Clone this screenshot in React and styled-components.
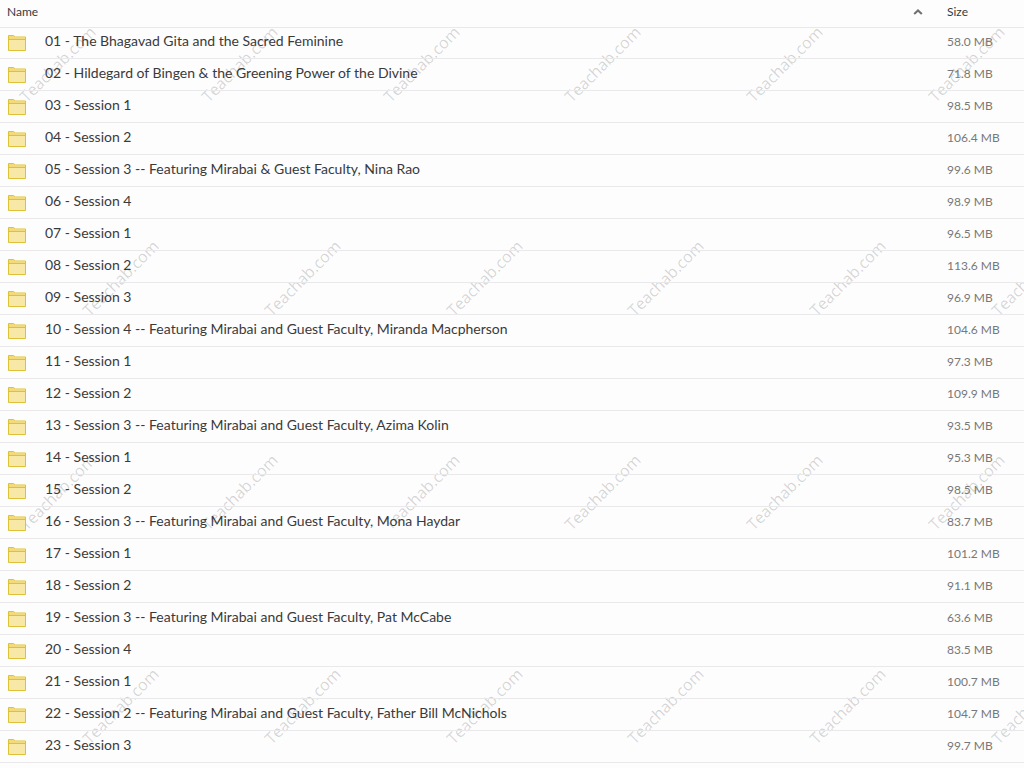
import React from 'react';
import styled, { createGlobalStyle } from 'styled-components';

//------------------------------------------------------------------------------
// DATA:
//------------------------------------------------------------------------------
const folders = [
  { name: '01 - The Bhagavad Gita and the Sacred Feminine', size: '58.0 MB' },
  { name: '02 - Hildegard of Bingen & the Greening Power of the Divine', size: '71.8 MB' },
  { name: '03 - Session 1', size: '98.5 MB' },
  { name: '04 - Session 2', size: '106.4 MB' },
  { name: '05 - Session 3 -- Featuring Mirabai & Guest Faculty, Nina Rao', size: '99.6 MB' },
  { name: '06 - Session 4', size: '98.9 MB' },
  { name: '07 - Session 1', size: '96.5 MB' },
  { name: '08 - Session 2', size: '113.6 MB' },
  { name: '09 - Session 3', size: '96.9 MB' },
  { name: '10 - Session 4 -- Featuring Mirabai and Guest Faculty, Miranda Macpherson', size: '104.6 MB' },
  { name: '11 - Session 1', size: '97.3 MB' },
  { name: '12 - Session 2', size: '109.9 MB' },
  { name: '13 - Session 3 -- Featuring Mirabai and Guest Faculty, Azima Kolin', size: '93.5 MB' },
  { name: '14 - Session 1', size: '95.3 MB' },
  { name: '15 - Session 2', size: '98.5 MB' },
  { name: '16 - Session 3 -- Featuring Mirabai and Guest Faculty, Mona Haydar', size: '83.7 MB' },
  { name: '17 - Session 1', size: '101.2 MB' },
  { name: '18 - Session 2', size: '91.1 MB' },
  { name: '19 - Session 3 -- Featuring Mirabai and Guest Faculty, Pat McCabe', size: '63.6 MB' },
  { name: '20 - Session 4', size: '83.5 MB' },
  { name: '21 - Session 1', size: '100.7 MB' },
  { name: '22 - Session 2 -- Featuring Mirabai and Guest Faculty, Father Bill McNichols', size: '104.7 MB' },
  { name: '23 - Session 3', size: '99.7 MB' },
];

const markRows = [0, 1, 2, 3];
const markColumns = [0, 1, 2, 3, 4, 5];

//------------------------------------------------------------------------------
// STYLE:
//------------------------------------------------------------------------------
const GlobalStyle = createGlobalStyle`
  body {
    margin: 0;
    background: #fdfdfd;
    color: #3a3a3a;
    font-family: Lato, 'Liberation Sans', sans-serif;
  }
`;

const Page = styled.main`
  position: relative;
  min-height: 100vh;
  overflow: hidden;
`;

const Table = styled.table`
  position: relative;
  z-index: 1;
  width: 100%;
  table-layout: fixed;
  border-collapse: separate;
  border-spacing: 0;
`;

const HeadCell = styled.th`
  box-sizing: border-box;
  width: ${({ $width }) => $width || 'auto'};
  height: 28px;
  padding: 0 0 4px 7px;
  border-bottom: 1px solid #e9e8ea;
  font-size: 12px;
  font-weight: 400;
  line-height: 16px;
  text-align: left;
`;

const SortButton = styled.button`
  display: flex;
  align-items: center;
  justify-content: space-between;
  width: 100%;
  padding: 0 17px 0 0;
  border: 0;
  background: none;
  color: inherit;
  font: inherit;
  cursor: pointer;
`;

const Row = styled.tr`
  height: 32px;

  &:first-child {
    height: 31px;
  }
`;

const Cell = styled.td`
  box-sizing: border-box;
  padding: 0 0 4px 7px;
  border-bottom: 1px solid #e9e8ea;
  font-size: 14px;
  line-height: 20px;
  white-space: nowrap;
`;

const SizeCell = styled(Cell)`
  padding-bottom: 2px;
  color: #787878;
  font-size: 12px;
`;

const FolderLabel = styled.div`
  display: flex;
  align-items: flex-start;
  gap: 18px;
  height: 20px;
`;

const FolderSvg = styled.svg`
  flex: none;
  width: 20px;
  height: 18px;
  margin-top: 3px;
`;

const Watermark = styled.div`
  position: absolute;
  top: -43px;
  left: 0;
  color: rgba(0, 0, 0, 0.17);
  font-family: 'Open Sans', 'Noto Sans', sans-serif;
  font-size: 16px;
  font-weight: 500;
  line-height: 24px;
  pointer-events: none;
  user-select: none;
`;

const MarkRow = styled.div`
  display: grid;
  grid-template-columns: repeat(6, 1fr);
  place-items: center;
  width: 1090px;
  height: 214px;
  margin-left: ${({ $shifted }) => ($shifted ? '30px' : '-33px')};
`;

const Mark = styled.span`
  transform: rotate(-45deg);
`;

//------------------------------------------------------------------------------
// COMPONENT:
//------------------------------------------------------------------------------
const FolderIcon = () => (
  <FolderSvg viewBox="0 0 20 18" aria-hidden="true">
    <path d="M1.5 16.5V1.5h5l2 1.5h10v13.5z" fill="#f8e8a8" stroke="#dcc234" />
    <path d="M2 2h4.3l2 1.5H18V5H2z" fill="#f3da7c" />
    <path d="M1.5 5.5h17" stroke="#dcc234" />
  </FolderSvg>
);

const SortArrow = () => (
  <svg width="10" height="8" viewBox="0 0 10 8" fill="none" aria-hidden="true">
    <path d="M1.2 6L5 2.4 8.8 6" stroke="#707070" strokeWidth="2" />
  </svg>
);

class App extends React.PureComponent {

  state = {
    ascending: true,
  }

  handleSort = () => {
    this.setState(prevState => ({ ascending: !prevState.ascending }));
  }

  render() {
    const { ascending } = this.state;
    const rows = ascending ? folders : [...folders].reverse();

    return (
      <Page>
        <GlobalStyle />
        <Table>
          <thead>
            <tr>
              <HeadCell aria-sort={ascending ? 'ascending' : 'descending'}>
                <SortButton type="button" onClick={this.handleSort}>
                  Name
                  <SortArrow />
                </SortButton>
              </HeadCell>
              <HeadCell $width="84px">Size</HeadCell>
            </tr>
          </thead>
          <tbody>
            {rows.map(({ name, size }) => (
              <Row key={name}>
                <Cell>
                  <FolderLabel>
                    <FolderIcon />
                    {name}
                  </FolderLabel>
                </Cell>
                <SizeCell>{size}</SizeCell>
              </Row>
            ))}
          </tbody>
        </Table>
        <Watermark aria-hidden="true">
          {markRows.map(row => (
            <MarkRow key={row} $shifted={row % 2 === 1}>
              {markColumns.map(column => <Mark key={column}>Teachab.com</Mark>)}
            </MarkRow>
          ))}
        </Watermark>
      </Page>
    );
  }
}

export default App;
